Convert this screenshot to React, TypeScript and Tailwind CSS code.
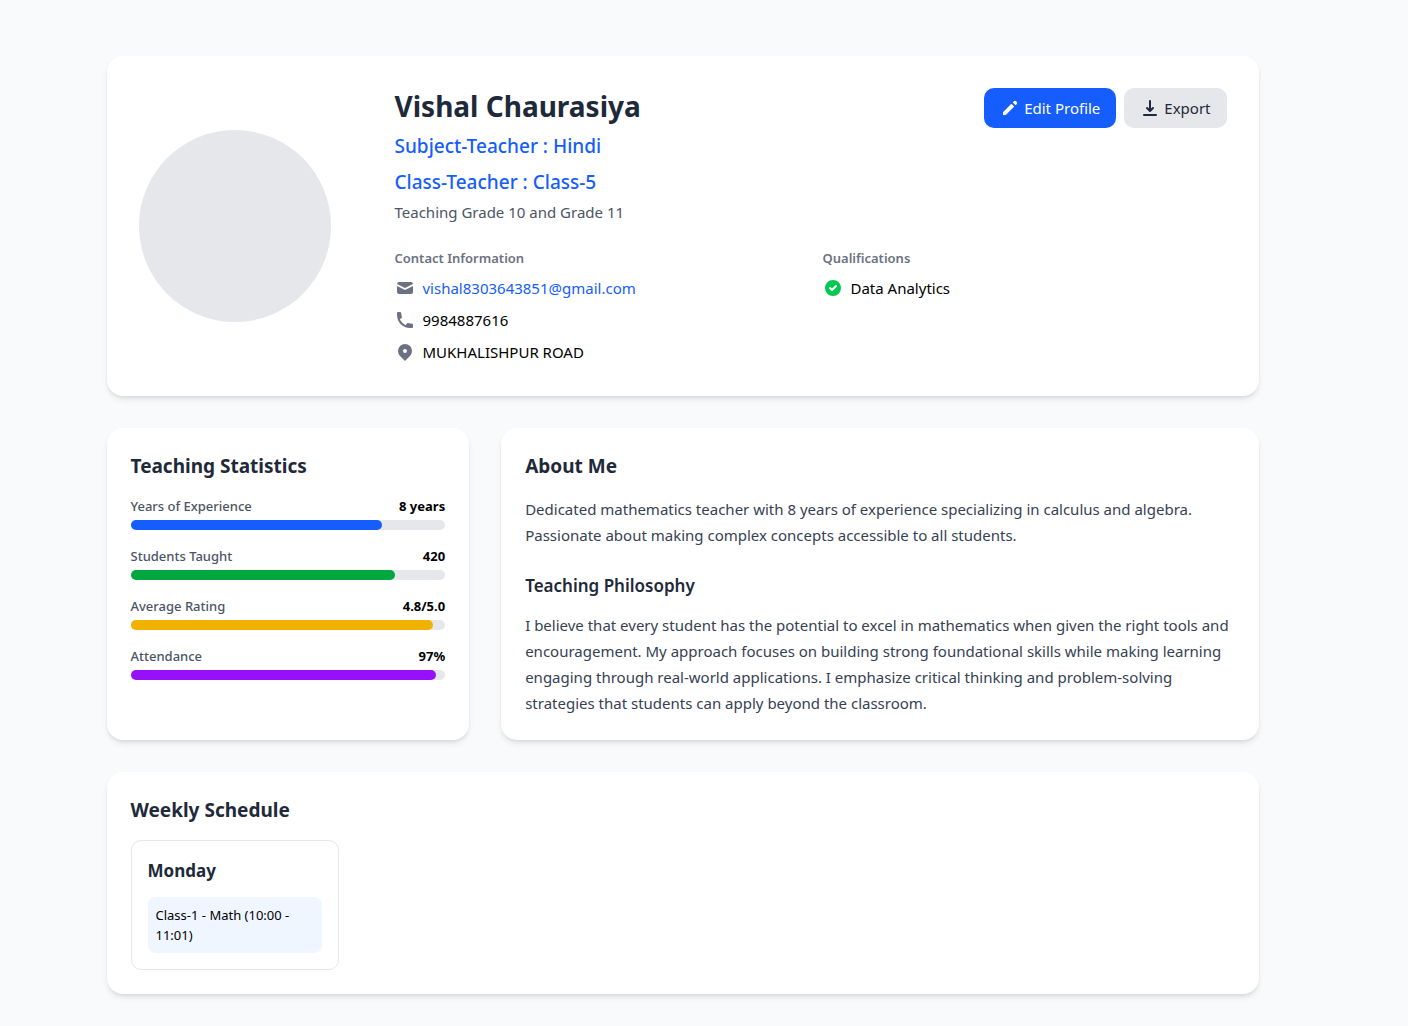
import type { ReactNode } from 'react';

const icons = {
  pencil:
    'M13.586 3.586a2 2 0 112.828 2.828l-.793.793-2.828-2.828.793-.793zM11.379 5.793L3 14.172V17h2.828l8.38-8.379-2.83-2.828z',
  download:
    'M3 17a1 1 0 011-1h12a1 1 0 110 2H4a1 1 0 01-1-1zm3.293-7.707a1 1 0 011.414 0L9 10.586V3a1 1 0 112 0v7.586l1.293-1.293a1 1 0 111.414 1.414l-3 3a1 1 0 01-1.414 0l-3-3a1 1 0 010-1.414z',
  mail: 'M2.003 5.884L10 9.882l7.997-3.998A2 2 0 0016 4H4a2 2 0 00-1.997 1.884zM18 8.118l-8 4-8-4V14a2 2 0 002 2h12a2 2 0 002-2V8.118z',
  phone:
    'M2 3a1 1 0 011-1h2.153a1 1 0 01.986.836l.74 4.435a1 1 0 01-.54 1.06l-1.548.773a11.037 11.037 0 006.105 6.105l.774-1.548a1 1 0 011.059-.54l4.435.74a1 1 0 01.836.986V17a1 1 0 01-1 1h-2C7.82 18 2 12.18 2 5V3z',
  pin: 'M5.05 4.05a7 7 0 119.9 9.9L10 18.9l-4.95-4.95a7 7 0 010-9.9zM10 11a2 2 0 100-4 2 2 0 000 4z',
  check:
    'M10 18a8 8 0 100-16 8 8 0 000 16zm3.707-9.293a1 1 0 00-1.414-1.414L9 10.586 7.707 9.293a1 1 0 00-1.414 1.414l2 2a1 1 0 001.414 0l4-4z',
};

function Icon({ name, className = '' }: { name: keyof typeof icons; className?: string }) {
  return (
    <svg className={`size-5 shrink-0 ${className}`} viewBox="0 0 20 20" fill="currentColor" aria-hidden="true">
      <path fillRule="evenodd" clipRule="evenodd" d={icons[name]} />
    </svg>
  );
}

function Card({ className = '', children }: { className?: string; children: ReactNode }) {
  return <section className={`rounded-2xl bg-white shadow-md ${className}`}>{children}</section>;
}

function CardTitle({ children }: { children: ReactNode }) {
  return <h2 className="mb-4 text-[19px] leading-7 font-bold text-gray-800">{children}</h2>;
}

const stats = [
  { label: 'Years of Experience', value: '8 years', percent: 80, color: 'bg-blue-600' },
  { label: 'Students Taught', value: '420', percent: 84, color: 'bg-green-600' },
  { label: 'Average Rating', value: '4.8/5.0', percent: 96, color: 'bg-yellow-500' },
  { label: 'Attendance', value: '97%', percent: 97, color: 'bg-purple-600' },
];

const schedule = [{ day: 'Monday', classes: ['Class-1 - Math (10:00 - 11:01)'] }];

export default function App() {
  return (
    <div className="min-h-screen bg-gray-50 pt-14 pr-[43px] pb-8 font-['Noto_Sans','Open_Sans',sans-serif] text-[15px] leading-6 text-black">
      <main className="mx-auto flex max-w-6xl flex-col gap-8">
        <Card className="flex flex-col items-center gap-8 p-8 md:flex-row md:gap-16">
          <div className="size-48 shrink-0 rounded-full bg-gray-200" role="img" aria-label="Profile photo" />
          <div className="w-full flex-1">
            <div className="flex items-start justify-between gap-4">
              <div>
                <h1 className="text-[28px] leading-9 font-bold text-gray-800">Vishal Chaurasiya</h1>
                <p className="mt-2 text-[19px] leading-7 font-medium text-blue-600">Subject-Teacher : Hindi</p>
                <p className="mt-2 text-[19px] leading-7 font-medium text-blue-600">Class-Teacher : Class-5</p>
                <p className="mt-1 text-gray-600">Teaching Grade 10 and Grade 11</p>
              </div>
              <div className="flex gap-2">
                <button type="button" className="flex items-center gap-1 rounded-[10px] bg-blue-600 px-4 py-2 text-white">
                  <Icon name="pencil" />
                  Edit Profile
                </button>
                <button type="button" className="flex items-center gap-1 rounded-[10px] bg-gray-200 px-4 py-2 text-gray-800">
                  <Icon name="download" />
                  Export
                </button>
              </div>
            </div>
            <div className="mt-6 grid grid-cols-1 gap-6 md:grid-cols-2">
              <div>
                <h3 className="mb-2 text-[13px] leading-5 font-semibold text-gray-500">Contact Information</h3>
                <ul className="space-y-2">
                  <li className="flex items-center gap-2">
                    <Icon name="mail" className="text-gray-500" />
                    <a href="mailto:vishal8303643851@gmail.com" className="text-blue-600">
                      vishal8303643851@gmail.com
                    </a>
                  </li>
                  <li className="flex items-center gap-2">
                    <Icon name="phone" className="text-gray-500" />
                    9984887616
                  </li>
                  <li className="flex items-center gap-2">
                    <Icon name="pin" className="text-gray-500" />
                    MUKHALISHPUR ROAD
                  </li>
                </ul>
              </div>
              <div>
                <h3 className="mb-2 text-[13px] leading-5 font-semibold text-gray-500">Qualifications</h3>
                <ul className="space-y-2">
                  <li className="flex items-center gap-2">
                    <Icon name="check" className="text-green-500" />
                    Data Analytics
                  </li>
                </ul>
              </div>
            </div>
          </div>
        </Card>

        <div className="grid grid-cols-1 gap-8 lg:grid-cols-3">
          <Card className="p-6">
            <CardTitle>Teaching Statistics</CardTitle>
            <div className="space-y-4">
              {stats.map((s) => (
                <div key={s.label}>
                  <div className="mb-1 flex justify-between text-[13px] leading-5">
                    <span className="font-medium text-gray-600">{s.label}</span>
                    <span className="font-bold">{s.value}</span>
                  </div>
                  <div className="h-2.5 rounded-full bg-gray-200">
                    <div className={`h-2.5 rounded-full ${s.color}`} style={{ width: `${s.percent}%` }} />
                  </div>
                </div>
              ))}
            </div>
          </Card>

          <Card className="p-6 lg:col-span-2">
            <CardTitle>About Me</CardTitle>
            <p className="leading-[26px] text-gray-700">
              Dedicated mathematics teacher with 8 years of experience specializing in calculus and algebra. Passionate
              about making complex concepts accessible to all students.
            </p>
            <h3 className="mt-6 mb-3 text-[17px] leading-7 font-semibold text-gray-800">Teaching Philosophy</h3>
            <p className="leading-[26px] text-gray-700">
              I believe that every student has the potential to excel in mathematics when given the right tools and
              encouragement. My approach focuses on building strong foundational skills while making learning engaging
              through real-world applications. I emphasize critical thinking and problem-solving strategies that
              students can apply beyond the classroom.
            </p>
          </Card>
        </div>

        <Card className="p-6">
          <CardTitle>Weekly Schedule</CardTitle>
          <div className="grid grid-cols-1 gap-4 md:grid-cols-5">
            {schedule.map((d) => (
              <div key={d.day} className="rounded-[10px] border border-gray-200 p-4">
                <h3 className="mb-3 text-[17px] leading-7 font-bold text-gray-800">{d.day}</h3>
                <ul className="space-y-2">
                  {d.classes.map((c) => (
                    <li key={c} className="rounded-lg bg-blue-50 p-2 text-[13px] leading-5">
                      {c}
                    </li>
                  ))}
                </ul>
              </div>
            ))}
          </div>
        </Card>
      </main>
    </div>
  );
}
